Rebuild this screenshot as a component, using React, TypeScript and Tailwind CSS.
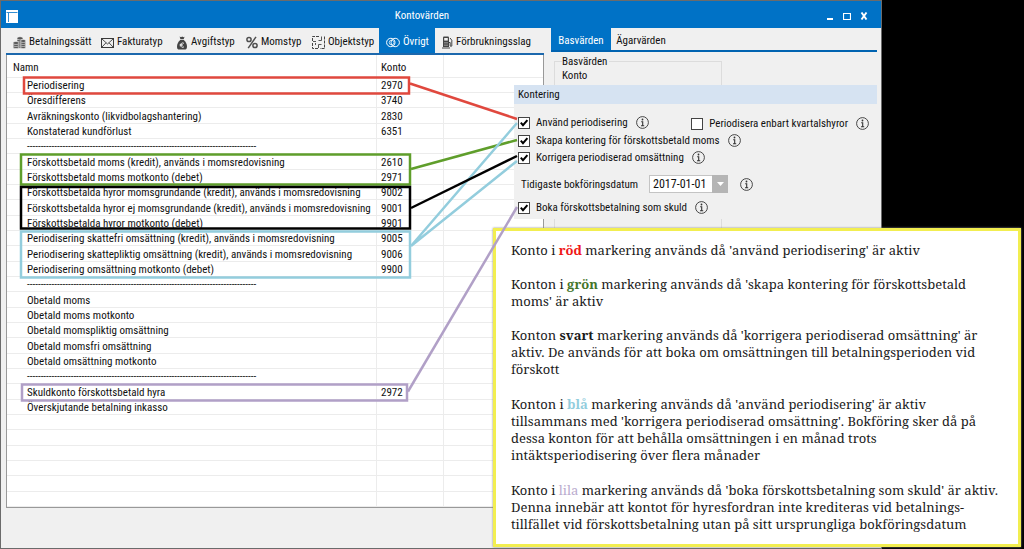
import { useState, type ReactNode } from "react"
import { clsx } from "clsx"

const DIVIDER = "-".repeat(84)

const konton: [string, string][] = [
  ["Periodisering", "2970"],
  ["Öresdifferens", "3740"],
  ["Avräkningskonto (likvidbolagshantering)", "2830"],
  ["Konstaterad kundförlust", "6351"],
  [DIVIDER, ""],
  ["Förskottsbetald moms (kredit), används i momsredovisning", "2610"],
  ["Förskottsbetald moms motkonto (debet)", "2971"],
  ["Förskottsbetalda hyror momsgrundande (kredit), används i momsredovisning", "9002"],
  ["Förskottsbetalda hyror ej momsgrundande (kredit), används i momsredovisning", "9001"],
  ["Förskottsbetalda hyror motkonto (debet)", "9901"],
  ["Periodisering skattefri omsättning (kredit), används i momsredovisning", "9005"],
  ["Periodisering skattepliktig omsättning (kredit), används i momsredovisning", "9006"],
  ["Periodisering omsättning motkonto (debet)", "9900"],
  [DIVIDER, ""],
  ["Obetald moms", ""],
  ["Obetald moms motkonto", ""],
  ["Obetald momspliktig omsättning", ""],
  ["Obetald momsfri omsättning", ""],
  ["Obetald omsättning motkonto", ""],
  [DIVIDER, ""],
  ["Skuldkonto förskottsbetald hyra", "2972"],
  ["Överskjutande betalning inkasso", ""],
  ["", ""],
  ["", ""],
  ["", ""],
  ["", ""],
  ["", ""],
  ["", ""],
]

function CoinsIcon() {
  return (
    <svg width="13" height="13" viewBox="0 0 13 13" fill="#555" stroke="#f0f0f0" strokeWidth="0.6">
      <ellipse cx="7" cy="10.6" rx="3" ry="1.6" />
      <ellipse cx="7" cy="8.6" rx="3" ry="1.6" />
      <ellipse cx="7" cy="6.5" rx="3" ry="1.6" />
      <ellipse cx="7" cy="4.4" rx="3" ry="1.6" />
      <ellipse cx="7" cy="2.3" rx="3" ry="1.6" />
      <ellipse cx="3" cy="11" rx="3" ry="1.5" />
      <ellipse cx="3" cy="9" rx="3" ry="1.5" />
      <ellipse cx="3" cy="7" rx="3" ry="1.5" />
      <ellipse cx="10.2" cy="11" rx="2.7" ry="1.5" />
      <ellipse cx="10.2" cy="9" rx="2.7" ry="1.5" />
      <ellipse cx="10.2" cy="7" rx="2.7" ry="1.5" />
      <ellipse cx="10.2" cy="5" rx="2.7" ry="1.5" />
    </svg>
  )
}

function EnvelopeIcon() {
  return (
    <svg width="13" height="10" viewBox="0 0 13 10" fill="none" stroke="#3a3a3a">
      <rect x="0.5" y="0.5" width="12" height="9" />
      <path d="M1 1l5.5 5L12 1M1 9l4-4.2M12 9L8 4.8" strokeWidth="0.9" />
    </svg>
  )
}

function MoneyBagIcon() {
  return (
    <svg width="12" height="14" viewBox="0 0 12 14">
      <path d="M3.6 0.6L5 1.2 6.2 0.4 7.4 1.2 8.6 0.8 7.6 3.2H4.4z" fill="#444" />
      <path d="M4.2 4h3.6c1.6 1.4 3.2 3.6 3.2 6.4 0 2.2-0.9 3.1-2.6 3.1H3.4C1.8 13.5 1 12.6 1 10.4 1 7.6 2.6 5.4 4.2 4z" fill="#444" />
      <path d="M8 7.4C6.4 6.3 4.8 7 4.8 9.1s1.6 2.9 3.2 1.7M3.7 8.4h3M3.7 9.7h3" fill="none" stroke="#f0f0f0" strokeWidth="0.9" />
    </svg>
  )
}

function PercentIcon() {
  return (
    <svg width="12" height="13" viewBox="0 0 12 13" fill="none" stroke="#505050" strokeWidth="1.5">
      <circle cx="3" cy="3.5" r="2.1" />
      <circle cx="9" cy="9.5" r="2.1" />
      <path d="M10 0.8L2.2 12.2" />
    </svg>
  )
}

function PlanIcon() {
  return (
    <svg width="13" height="13" viewBox="0 0 13 13" fill="none" stroke="#444">
      <path d="M0.5 5V0.5H7M12.5 0.5V12.5H8M0.5 7v5.5H6" strokeDasharray="3 1" />
      <path d="M9.5 0.5v4H6.5M6.5 12V8.5H9.5M4 5.5H1M3.5 9v-2" strokeWidth="0.9" />
    </svg>
  )
}

function RingsIcon() {
  return (
    <svg width="14" height="11" viewBox="0 0 14 11" fill="none" stroke="#fff">
      <circle cx="4.8" cy="5.5" r="4.2" />
      <circle cx="9.2" cy="5.5" r="4.2" />
      <circle cx="5.6" cy="5.5" r="2.4" strokeWidth="0.7" />
    </svg>
  )
}

function FuelIcon() {
  return (
    <svg width="11" height="13" viewBox="0 0 11 13">
      <path d="M1 1.5Q1 0.5 2 0.5H6Q7 0.5 7 1.5V11H1z" fill="#444" />
      <path d="M2.2 2h3.6v2.6H2.2z" fill="#f0f0f0" />
      <path d="M2 6.5h4M2 8h4M2 9.5h4" stroke="#aaa" strokeWidth="0.6" />
      <path d="M0 12h8" stroke="#444" />
      <path d="M7 6.5h1.2v3.5q0.9 1 1.6 0V4.2L8 2" fill="none" stroke="#444" />
    </svg>
  )
}

function InfoIcon() {
  return (
    <svg width="13" height="13" viewBox="0 0 13 13" fill="none" stroke="#333" className="shrink-0">
      <circle cx="6.5" cy="6.5" r="5.9" strokeWidth="0.9" />
      <circle cx="6.5" cy="3.5" r="0.9" fill="#333" stroke="none" />
      <path d="M5.2 5.7h1.5v4M5 9.8h3.2" strokeWidth="1.1" />
    </svg>
  )
}

const tabs: { label: string; icon: ReactNode; width: string }[] = [
  { label: "Betalningssätt", icon: <CoinsIcon />, width: "w-[88px]" },
  { label: "Fakturatyp", icon: <EnvelopeIcon />, width: "w-[75px]" },
  { label: "Avgiftstyp", icon: <MoneyBagIcon />, width: "w-[70px]" },
  { label: "Momstyp", icon: <PercentIcon />, width: "w-[66px]" },
  { label: "Objektstyp", icon: <PlanIcon />, width: "w-[74px]" },
  { label: "Övrigt", icon: <RingsIcon />, width: "w-[56px]" },
  { label: "Förbrukningsslag", icon: <FuelIcon />, width: "w-[100px]" },
]

function Check({ label, defaultChecked = false }: { label: string; defaultChecked?: boolean }) {
  return (
    <div className="flex items-center gap-2">
      <label className="flex items-center gap-[6px] whitespace-nowrap">
        <span className="relative block size-3">
          <input
            type="checkbox"
            defaultChecked={defaultChecked}
            className="peer block size-3 appearance-none border border-[#444] bg-white"
          />
          <svg viewBox="0 0 12 12" className="pointer-events-none absolute inset-0 hidden size-3 peer-checked:block" fill="none" stroke="#000" strokeWidth="2">
            <path d="M2.8 5.6L5 8.2 9.4 3.2" />
          </svg>
        </span>
        {label}
      </label>
      <InfoIcon />
    </div>
  )
}

function Kontering() {
  return (
    <section className="absolute top-[84px] right-1 left-[513px] h-[134px] bg-[#f0f0f0]">
      <h2 className="h-[19px] bg-[#d6e3f2] pl-1 leading-[19px]">Kontering</h2>
      <div className="flex flex-col pl-1 leading-[17px]">
        <div className="flex items-start justify-between pt-[10px] pr-2">
          <Check label="Använd periodisering" defaultChecked />
          <div className="pt-[1px]">
            <Check label="Periodisera enbart kvartalshyror" />
          </div>
        </div>
        <Check label="Skapa kontering för förskottsbetald moms" defaultChecked />
        <Check label="Korrigera periodiserad omsättning" defaultChecked />
        <div className="flex items-center gap-3 pt-[9px] pb-[6px] pl-[3px]">
          <label htmlFor="datum" className="w-[116px] whitespace-nowrap">Tidigaste bokföringsdatum</label>
          <div className="relative">
            <select id="datum" className="block h-[18px] w-[79px] appearance-none border border-[#c4c4c4] bg-white pl-[3px] text-[12px] leading-4">
              <option>2017-01-01</option>
            </select>
            <span className="pointer-events-none absolute inset-y-0 right-0 flex w-4 items-center justify-center bg-[#b5b5b5]">
              <svg width="7" height="4" viewBox="0 0 7 4" fill="#fff">
                <path d="M0 0h7L3.5 4z" />
              </svg>
            </span>
          </div>
          <InfoIcon />
        </div>
        <Check label="Boka förskottsbetalning som skuld" defaultChecked />
      </div>
    </section>
  )
}

// Coloured frames and connectors between the accounts and the settings
function Markeringar() {
  return (
    <svg width="1024" height="549" viewBox="0 0 1024 549" fill="none" strokeWidth="2.5" className="pointer-events-none absolute top-0 left-0">
      <g stroke="#e0483e">
        <rect x="24" y="77.5" width="385" height="16" />
        <path d="M410 83.5L517 119" />
      </g>
      <g stroke="#5f9e2b">
        <rect x="21" y="154.5" width="389" height="30" />
        <path d="M411 169L517 140" />
      </g>
      <g stroke="#93cddd">
        <rect x="21" y="231.5" width="389" height="46" />
        <path d="M411 246L517 123M411 246L517 161" />
      </g>
      <g stroke="#000">
        <rect x="21" y="187" width="389" height="41.5" />
        <path d="M411 208L517 156" />
      </g>
      <g stroke="#b1a0c7">
        <rect x="22" y="384.5" width="385" height="16" />
        <path d="M408 391.5L517 207" />
      </g>
    </svg>
  )
}

function Note() {
  return (
    <aside className="absolute top-[228px] right-[3px] left-[493px] h-[319px] border-3 border-[#f2ee50] bg-white px-[15px] pt-[11px] font-['Noto_Serif','DejaVu_Serif',serif] text-[13px] leading-[17px] whitespace-nowrap text-[#1a1a1a] shadow-[0_0_2px_#888]">
      <p>
        Konto i <b className="text-[#f01818]">röd</b> markering används då 'använd periodisering' är aktiv
      </p>
      <p className="mt-[17px]">
        Konton i <b className="text-[#44752a]">grön</b> markering används då 'skapa kontering för förskottsbetald
        <br />
        moms' är aktiv
      </p>
      <p className="mt-[17px]">
        Konton <b>svart</b> markering används då 'korrigera periodiserad omsättning' är
        <br />
        aktiv. De används för att boka om omsättningen till betalningsperioden vid
        <br />
        förskott
      </p>
      <p className="mt-[18px]">
        Konton i <b className="text-[#93cddd]">blå</b> markering används då 'använd periodisering' är aktiv
        <br />
        tillsammans med 'korrigera periodiserad omsättning'. Bokföring sker då på
        <br />
        dessa konton för att behålla omsättningen i en månad trots
        <br />
        intäktsperiodisering över flera månader
      </p>
      <p className="mt-[18px]">
        Konto i <span className="text-[#b9abce]">lila</span> markering används då 'boka förskottsbetalning som skuld' är aktiv.
        <br />
        Denna innebär att kontot för hyresfordran inte krediteras vid betalnings-
        <br />
        tillfället vid förskottsbetalning utan på sitt ursprungliga bokföringsdatum
      </p>
    </aside>
  )
}

export default function App() {
  const [active, setActive] = useState("Övrigt")
  const [side, setSide] = useState("Basvärden")

  return (
    <div className="relative min-h-screen bg-black font-['Roboto_Condensed','Liberation_Sans_Narrow','Liberation_Sans',sans-serif] text-[11px] text-[#111]">
      <main className="relative mr-[142px] flex min-h-screen flex-col border border-[#6b6b6b] bg-[#f0f0f0]">
        <header className="relative flex h-[27px] items-center justify-between bg-[#0072c6] pt-[3px] pr-[13px] pl-[5px] text-white">
          <svg width="12" height="13" viewBox="0 0 12 13">
            <path d="M0 0h12v13H0z" fill="#fff" />
            <path d="M0.5 2.5h11M2.5 3v9" stroke="#0072c6" strokeWidth="0.8" />
          </svg>
          <h1 className="absolute inset-x-0 pr-[38px] text-center">Kontovärden</h1>
          <div className="relative flex items-center gap-[9px]">
            <button aria-label="Minimera">
              <svg width="8" height="8" viewBox="0 0 8 8"><path d="M1 7h6" stroke="#fff" strokeWidth="2" /></svg>
            </button>
            <button aria-label="Maximera">
              <svg width="8" height="8" viewBox="0 0 8 8" fill="none" stroke="#fff"><path d="M0.5 1v6.5h7V1M0 1.5h8" strokeWidth="1.2" /></svg>
            </button>
            <button aria-label="Stäng">
              <svg width="8" height="8" viewBox="0 0 8 8"><path d="M1.5 0.5l5 7M6.5 0.5l-5 7" stroke="#fff" strokeWidth="1.9" /></svg>
            </button>
          </div>
        </header>

        <div className="flex items-start pl-[5px]">
          <div className="w-[538px] shrink-0">
            <nav className="flex h-[27px] border-b-2 border-[#1c68ad]">
              {tabs.map((tab) => (
                <button
                  key={tab.label}
                  onClick={() => setActive(tab.label)}
                  className={clsx(
                    "flex items-center gap-[3px] pt-1 pl-[7px] whitespace-nowrap",
                    tab.width,
                    active === tab.label && "bg-[#0072c6] text-white"
                  )}
                >
                  {tab.icon}
                  {tab.label}
                </button>
              ))}
            </nav>
            <div className="border border-t-0 border-[#999] bg-white">
              <table className="w-full table-fixed border-separate border-spacing-0">
                <colgroup>
                  <col className="w-[370px]" />
                  <col className="w-[67px]" />
                  <col />
                </colgroup>
                <thead>
                  <tr className="h-[23px] text-left leading-[13px]">
                    <th className="border-r border-b border-[#ececec] p-0 pt-[2px] pl-[6px] font-normal">Namn</th>
                    <th className="border-r border-b border-[#ececec] p-0 pt-[2px] pl-1 font-normal">Konto</th>
                    <th className="border-b border-[#ececec] p-0" />
                  </tr>
                </thead>
                <tbody>
                  {konton.map(([namn, konto], i) => (
                    <tr key={i} className="h-[15px] leading-[13px] nth-[3n]:h-4">
                      <td className="border-r border-b border-[#ececec] p-0 pt-[1px] pl-5 whitespace-nowrap">{namn}</td>
                      <td className="border-r border-b border-[#ececec] p-0 pt-[1px] pl-1">{konto}</td>
                      <td className="border-b border-[#ececec] p-0" />
                    </tr>
                  ))}
                </tbody>
              </table>
            </div>
          </div>

          <div className="min-w-0 flex-1 pr-1 pl-[7px]">
            <nav className="flex h-6 border-b-2 border-[#0063b1]">
              {["Basvärden", "Ägarvärden"].map((name) => (
                <button
                  key={name}
                  onClick={() => setSide(name)}
                  className={clsx("w-[60px] pt-[5px]", side === name && "bg-[#0072c6] text-white")}
                >
                  {name}
                </button>
              ))}
            </nav>
            <fieldset className="mt-[3px] ml-[3px] h-[260px] w-[168px] border border-[#dcdcdc] pl-[7px]">
              <legend className="pr-[2px] pl-0 leading-[13px]">Basvärden</legend>
              <p className="leading-4">Konto</p>
            </fieldset>
          </div>
        </div>
        <Kontering />
      </main>
      <Note />
      <Markeringar />
    </div>
  )
}
